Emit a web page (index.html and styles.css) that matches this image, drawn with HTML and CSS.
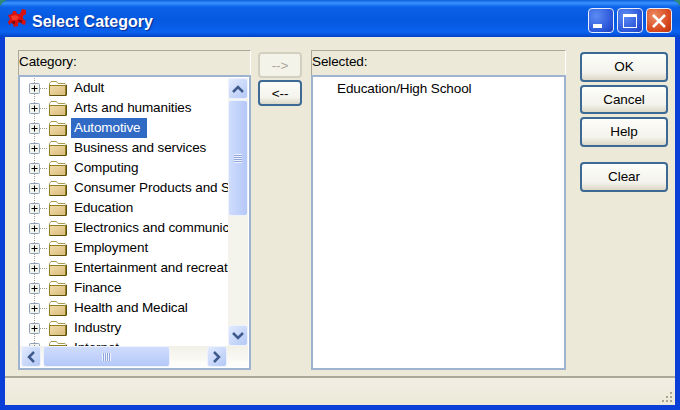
FILE: index.html
```html
<!DOCTYPE html>
<html lang="en">
<head>
<meta charset="utf-8">
<title>Select Category</title>
<link rel="stylesheet" href="styles.css">
</head>
<body>
<svg class="defs" width="0" height="0" aria-hidden="true">
  <defs>
    <linearGradient id="fg" x1="0" y1="0" x2="1" y2="1">
      <stop offset="0" stop-color="#f2dfae"/>
      <stop offset="1" stop-color="#d8b878"/>
    </linearGradient>
    <symbol id="folder" viewBox="0 0 19 17">
      <path d="M1.500 15.500V3.500L3 1.500H8.500L10 3.500H17L18 4.500V15.500Z" fill="#fff" stroke="#a89a50"/>
      <path d="M1.500 15.500V5.500H17.500V15.500Z" fill="url(#fg)" stroke="#8f7f20"/>
      <path d="M2 15.500H18" stroke="#5e5208"/>
      <path d="M18.500 5V15.500" stroke="#5e5208"/>
    </symbol>
    <symbol id="plus" viewBox="0 0 11 11">
      <rect x="0.500" y="0.500" width="10" height="10" rx="1" fill="#f4f4ee" stroke="#8ea2b8"/>
      <path d="M2.500 5.500H8.500M5.500 2.500V8.500" stroke="#000"/>
    </symbol>
  </defs>
</svg>
<div class="window">
  <header class="titlebar">
    <svg class="app-icon" width="20" height="20" viewBox="0 0 20 20" aria-hidden="true">
      <path d="M1 7L5 6L6 3L9 3L10 6L13 6L15 1L19 2L19 6L16 8L16 11L19 13L18 17L15 16L13 14L11 15L11 18L7 19L6 16L4 15L2 17L1 14L3 11Z" fill="#d81010"/>
      <path d="M4 8L9 7L12 9L10 12L5 12Z" fill="#f23a2a"/>
      <path d="M11 12L15 12L15 15L12 14ZM4 14L8 13L8 17Z" fill="#7a0a0a"/>
    </svg>
    <span class="title-text">Select Category</span>
    <div class="caption-btns">
      <div class="cap cap-blue"><span class="min-glyph"></span></div>
      <div class="cap cap-blue"><span class="max-glyph"></span></div>
      <div class="cap cap-red">
        <svg width="16" height="16" viewBox="0 0 16 16" aria-hidden="true"><path d="M2 2L14 14M14 2L2 14" stroke="#fff" stroke-width="2.500"/></svg>
      </div>
    </div>
  </header>
  <div class="client">
    <main class="content">
      <section class="panel panel-left">
        <div class="panel-head">Category:</div>
        <div class="listbox tree-box">
          <div class="tree-top">
            <ul class="tree">
              <li class="row"><svg class="plus"><use href="#plus"/></svg><span class="dots"></span><svg class="folder"><use href="#folder"/></svg><span class="label">Adult</span></li>
              <li class="row"><svg class="plus"><use href="#plus"/></svg><span class="dots"></span><svg class="folder"><use href="#folder"/></svg><span class="label">Arts and humanities</span></li>
              <li class="row"><svg class="plus"><use href="#plus"/></svg><span class="dots"></span><svg class="folder"><use href="#folder"/></svg><span class="label selected">Automotive</span></li>
              <li class="row"><svg class="plus"><use href="#plus"/></svg><span class="dots"></span><svg class="folder"><use href="#folder"/></svg><span class="label">Business and services</span></li>
              <li class="row"><svg class="plus"><use href="#plus"/></svg><span class="dots"></span><svg class="folder"><use href="#folder"/></svg><span class="label">Computing</span></li>
              <li class="row"><svg class="plus"><use href="#plus"/></svg><span class="dots"></span><svg class="folder"><use href="#folder"/></svg><span class="label">Consumer Products and Services</span></li>
              <li class="row"><svg class="plus"><use href="#plus"/></svg><span class="dots"></span><svg class="folder"><use href="#folder"/></svg><span class="label">Education</span></li>
              <li class="row"><svg class="plus"><use href="#plus"/></svg><span class="dots"></span><svg class="folder"><use href="#folder"/></svg><span class="label">Electronics and communications</span></li>
              <li class="row"><svg class="plus"><use href="#plus"/></svg><span class="dots"></span><svg class="folder"><use href="#folder"/></svg><span class="label">Employment</span></li>
              <li class="row"><svg class="plus"><use href="#plus"/></svg><span class="dots"></span><svg class="folder"><use href="#folder"/></svg><span class="label">Entertainment and recreation</span></li>
              <li class="row"><svg class="plus"><use href="#plus"/></svg><span class="dots"></span><svg class="folder"><use href="#folder"/></svg><span class="label">Finance</span></li>
              <li class="row"><svg class="plus"><use href="#plus"/></svg><span class="dots"></span><svg class="folder"><use href="#folder"/></svg><span class="label">Health and Medical</span></li>
              <li class="row"><svg class="plus"><use href="#plus"/></svg><span class="dots"></span><svg class="folder"><use href="#folder"/></svg><span class="label">Industry</span></li>
              <li class="row"><svg class="plus"><use href="#plus"/></svg><span class="dots"></span><svg class="folder"><use href="#folder"/></svg><span class="label">Internet</span></li>
            </ul>
            <div class="vscroll">
              <div class="sb-btn sb-btn-v"><svg width="14" height="10" viewBox="0 0 14 10" aria-hidden="true"><path d="M2 8L7 3L12 8" fill="none" stroke="#3f5a8c" stroke-width="2.500"/></svg></div>
              <div class="v-track">
                <div class="v-thumb"><span class="grip-h"></span></div>
              </div>
              <div class="sb-btn sb-btn-v"><svg width="14" height="10" viewBox="0 0 14 10" aria-hidden="true"><path d="M2 2L7 7L12 2" fill="none" stroke="#3f5a8c" stroke-width="2.500"/></svg></div>
            </div>
          </div>
          <div class="hscroll">
            <div class="sb-btn sb-btn-h"><svg width="10" height="14" viewBox="0 0 10 14" aria-hidden="true"><path d="M8 2L3 7L8 12" fill="none" stroke="#3f5a8c" stroke-width="2.500"/></svg></div>
            <div class="h-thumb"><span class="grip-v"></span></div>
            <div class="h-track"></div>
            <div class="sb-btn sb-btn-h"><svg width="10" height="14" viewBox="0 0 10 14" aria-hidden="true"><path d="M2 2L7 7L2 12" fill="none" stroke="#3f5a8c" stroke-width="2.500"/></svg></div>
          </div>
        </div>
      </section>
      <div class="arrows">
        <button class="btn btn-arrow" disabled>--&gt;</button>
        <button class="btn btn-arrow">&lt;--</button>
      </div>
      <section class="panel panel-right">
        <div class="panel-head">Selected:</div>
        <div class="listbox selected-box">Education/High School</div>
      </section>
      <div class="actions">
        <button class="btn btn-action">OK</button>
        <button class="btn btn-action">Cancel</button>
        <button class="btn btn-action">Help</button>
        <button class="btn btn-action btn-clear">Clear</button>
      </div>
    </main>
    <footer class="statusbar">
      <svg class="grip" width="14" height="14" viewBox="0 0 14 14" aria-hidden="true">
        <path d="M10 1h2v2h-2zM6 5h2v2H6zM10 5h2v2h-2zM2 9h2v2H2zM6 9h2v2H6zM10 9h2v2h-2z" fill="#a8a490"/>
      </svg>
    </footer>
  </div>
</div>
</body>
</html>
```
FILE: styles.css
```css
* { box-sizing: border-box; }
html, body { margin: 0; padding: 0; }
body {
  width: 680px;
  height: 410px;
  overflow: hidden;
  background: #2f8a7a;
  font-family: "Liberation Sans", Arial, sans-serif;
  font-size: 13.5px;
  letter-spacing: -0.1px;
  color: #000;
}
.defs { display: block; height: 0; }
.window {
  width: 680px;
  height: 410px;
  display: flex;
  flex-direction: column;
  border-radius: 9px 9px 0 0;
  overflow: hidden;
  background: #0a3fd8;
}
.titlebar {
  height: 37px;
  flex: none;
  display: flex;
  align-items: center;
  padding: 0 8px 0 7px;
  background: linear-gradient(180deg, #0a5fd8 0, #3a93ff 3px, #0b62e8 7px, #0458e0 20px, #0a62ee 32px, #0444c8 37px);
}
.app-icon { flex: none; margin-top: -1px; }
.title-text {
  margin-left: 5px;
  padding-top: 7px;
  font-weight: 700;
  font-size: 16px;
  letter-spacing: 0;
  color: #fff;
  text-shadow: 1px 1px 1px #0a2a90;
  flex: 1;
}
.caption-btns { display: flex; gap: 3px; margin-top: 4px; }
.cap {
  width: 26px;
  height: 25px;
  border: 1px solid #e8eefc;
  border-radius: 4px;
  display: flex;
  align-items: center;
  justify-content: center;
}
.cap-blue { background: radial-gradient(circle at 30% 30%, #5c8cf4, #2a55d8 70%, #1e3fb8); }
.cap-red { background: radial-gradient(circle at 30% 30%, #ec8a60, #d8481e 65%, #b83410); }
.min-glyph { width: 9px; height: 4px; background: #fff; align-self: flex-end; margin: 0 8px 4px 0; }
.max-glyph { width: 14px; height: 14px; border: 1px solid #fff; border-top-width: 3px; }
.client {
  flex: 1;
  min-height: 0;
  margin: 0 5px 5px;
  background: #ece9d8;
  display: flex;
  flex-direction: column;
}
.content {
  height: 341px;
  flex: none;
  display: flex;
  align-items: flex-start;
  padding: 13px 0 0 13px;
  border-bottom: 2px solid #aca899;
}
.panel { display: flex; flex-direction: column; flex: none; }
.panel-left { width: 233px; }
.panel-right { width: 255px; margin-left: 9px; }
.panel-head {
  height: 25px;
  padding: 3px 0 0;
  line-height: 16px;
  border: 1px solid;
  border-color: #aca899 #fff transparent #aca899;
  border-bottom: 0;
}
.listbox {
  height: 295px;
  background: #fff;
  border: 2px solid #9db3d0;
}
.tree-box { display: flex; flex-direction: column; padding: 1px 1px 1px 0; }
.tree-top { flex: 1; min-height: 0; display: flex; }
.tree {
  list-style: none;
  margin: 0;
  padding: 0;
  flex: 1;
  min-width: 0;
  overflow: hidden;
}
.row {
  height: 20px;
  display: flex;
  align-items: center;
  white-space: nowrap;
  padding-left: 9px;
  background: repeating-linear-gradient(180deg, #a0a090 0 1px, transparent 1px 2px) 14px 0 / 1px 100% no-repeat;
}
.plus { width: 11px; height: 11px; flex: none; }
.dots {
  width: 8px;
  height: 1px;
  flex: none;
  background: repeating-linear-gradient(90deg, #a0a090 0 1px, transparent 1px 2px);
}
.folder { width: 19px; height: 17px; flex: none; margin-right: 4px; }
.label { padding: 0 3px; line-height: 20px; }
.selected { background: #316ac5; color: #fff; padding-right: 6px; }
.vscroll {
  width: 20px;
  flex: none;
  display: flex;
  flex-direction: column;
  background: #f4f4ec;
}
.sb-btn {
  flex: none;
  display: flex;
  align-items: center;
  justify-content: center;
  border: 1px solid #eef2fc;
  border-radius: 3px;
  background: linear-gradient(135deg, #e2ebfe, #b4c8f6);
}
.sb-btn-v { height: 21px; }
.sb-btn-h { width: 20px; }
.v-track { flex: 1; min-height: 0; padding-top: 1px; }
.v-thumb {
  height: 116px;
  display: flex;
  align-items: center;
  justify-content: center;
  border: 1px solid #eef2fc;
  border-radius: 3px;
  background: linear-gradient(90deg, #cfdcfc, #b4c8f8);
}
.grip-h {
  width: 8px;
  height: 9px;
  background: repeating-linear-gradient(180deg, #eef2fe 0 1px, #8ea6dc 1px 2px);
}
.hscroll {
  height: 21px;
  flex: none;
  display: flex;
  gap: 2px;
  padding-left: 1px;
  padding-right: 21px;
  background: linear-gradient(180deg, #f2f1e8, #fefefc);
}
.h-thumb {
  width: 127px;
  display: flex;
  align-items: center;
  justify-content: center;
  border: 1px solid #eef2fc;
  border-radius: 3px;
  background: linear-gradient(180deg, #cfdcfc, #b4c8f8);
}
.grip-v {
  width: 9px;
  height: 8px;
  background: repeating-linear-gradient(90deg, #eef2fe 0 1px, #8ea6dc 1px 2px);
}
.h-track { flex: 1; }
.selected-box { padding: 2px 0 0 24px; line-height: 20px; }
.arrows {
  flex: none;
  width: 44px;
  margin-left: 7px;
  display: flex;
  flex-direction: column;
  gap: 2px;
  padding-top: 2px;
}
.btn {
  display: block;
  font: inherit;
  letter-spacing: inherit;
  color: #000;
  padding: 0;
  border: 2px solid #3c6a94;
  border-radius: 4px;
  background: linear-gradient(180deg, #fdfdfa, #f4f3ec 70%, #dcd8c8);
}
.btn-arrow { height: 26px; width: 44px; }
.btn-arrow:disabled {
  border-color: #d4d0bf;
  background: #f4f3ea;
  color: #aca899;
}
.actions {
  flex: none;
  width: 88px;
  margin-left: 14px;
  display: flex;
  flex-direction: column;
  gap: 3px;
  padding-top: 2px;
}
.btn-action { height: 29.5px; width: 88px; }
.btn-clear { margin-top: 12.5px; }
.statusbar {
  flex: 1;
  min-height: 0;
  display: flex;
  align-items: flex-end;
  justify-content: flex-end;
  background: linear-gradient(180deg, #f1efe4, #ece9d8);
  padding: 0 1px 0 0;
}
.grip { flex: none; }
```
